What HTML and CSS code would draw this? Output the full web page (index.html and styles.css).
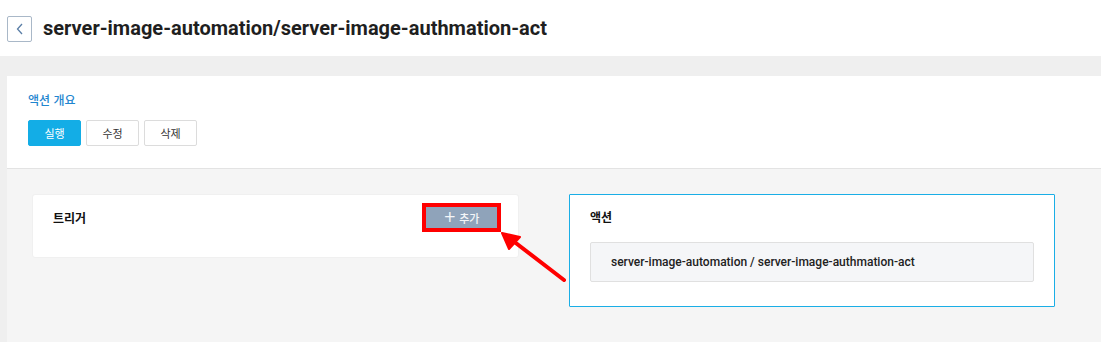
FILE: index.html
```html
<!DOCTYPE html>
<html lang="ko">
<head>
<meta charset="utf-8">
<link rel="stylesheet" href="styles.css">
</head>
<body>
<header class="top">
  <button class="back" aria-label="back">
    <svg width="8" height="12" viewBox="0 0 8 12"><path d="M6 1 L1.5 6 L6 11" fill="none" stroke="#5a7ea6" stroke-width="1.3"/></svg>
  </button>
  <h1 class="title">server-image-automation/server-image-authmation-act</h1>
</header>
<main class="wrap">
  <section class="panel">
    <div class="overview">
      <div class="ov-title">액션 개요</div>
      <div class="btns">
        <button class="btn primary">실행</button>
        <button class="btn">수정</button>
        <button class="btn">삭제</button>
      </div>
    </div>
    <div class="lower">
      <div class="card trigger">
        <div class="card-title">트리거</div>
        <button class="add"><span class="plus">+</span> 추가</button>
      </div>
      <div class="card action">
        <div class="card-title">액션</div>
        <div class="action-box">server-image-automation / server-image-authmation-act</div>
      </div>
    </div>
  </section>
</main>
<svg class="arrow" width="80" height="60" viewBox="0 0 80 60">
  <line x1="64" y1="48" x2="8" y2="5" stroke="#ff0000" stroke-width="4" stroke-linecap="round"/>
  <path d="M2 1 L20 5 L9 17 Z" fill="#ff0000" stroke="#ff0000" stroke-width="2" stroke-linejoin="round"/>
</svg>
</body>
</html>
```
FILE: styles.css
```css
* { box-sizing: border-box; }
html, body { margin: 0; padding: 0; }
body {
  background: #efefef;
  font-family: Roboto, "Noto Sans CJK KR", sans-serif;
  color: #222;
  width: 1101px;
  height: 342px;
  overflow: hidden;
  position: relative;
}
.top {
  height: 56px;
  background: #fff;
  display: flex;
  align-items: center;
  padding-left: 7px;
  gap: 11px;
}
.back {
  width: 25px;
  height: 26px;
  border: 1px solid #a9b8c8;
  border-radius: 2px;
  background: #fff;
  display: flex;
  align-items: center;
  justify-content: center;
  padding: 0;
  margin-top: 2px;
}
.title {
  margin: 0;
  font-size: 20px;
  font-weight: 700;
  color: #1f1f1f;
}
.wrap {
  padding: 20px 0 0 7px;
}
.panel {
  background: #fff;
  height: 266px;
  display: flex;
  flex-direction: column;
}
.overview {
  height: 93px;
  padding: 15px 21px 0;
  border-bottom: 1px solid #e3e3e3;
}
.ov-title {
  font-family: "Noto Sans CJK KR", sans-serif;
  font-size: 12px;
  font-weight: 500;
  color: #1f86cf;
  line-height: 18px;
}
.btns {
  display: flex;
  gap: 5px;
  margin-top: 11px;
}
.btn {
  width: 53px;
  height: 26px;
  border: 1px solid #dcdcdc;
  border-radius: 2px;
  background: #fff;
  font-family: "Noto Sans CJK KR", sans-serif;
  font-size: 11px;
  color: #333;
  padding: 0;
}
.btn.primary {
  background: #13ade6;
  border-color: #13ade6;
  color: #fff;
}
.lower {
  flex: 1;
  background: #f5f5f5;
  display: flex;
  align-items: flex-start;
  gap: 50px;
  padding: 25px 0 0 25px;
}
.card {
  background: #fff;
  border-radius: 3px;
}
.card-title {
  font-family: "Noto Sans CJK KR", sans-serif;
  font-size: 12px;
  font-weight: 700;
  color: #111;
  line-height: 18px;
}
.trigger {
  width: 487px;
  height: 64px;
  border: 1px solid #f0f0f0;
  display: flex;
  justify-content: space-between;
  align-items: flex-start;
  padding: 14px 21px 0 20px;
}
.add {
  margin-top: -2px;
  width: 71px;
  height: 21px;
  background: #8fa3ba;
  border: none;
  outline: 4px solid #ff0000;
  color: #f4f6f8;
  font-family: "Noto Sans CJK KR", sans-serif;
  font-size: 11px;
  font-weight: 500;
  padding: 0;
  display: flex;
  align-items: center;
  justify-content: center;
  gap: 3px;
}
.plus {
  font-family: "DejaVu Sans", sans-serif;
  font-size: 15px;
  font-weight: 400;
  line-height: 1;
  margin-top: -1px;
}
.action {
  width: 486px;
  height: 113px;
  border: 1px solid #1aaee6;
  border-radius: 1px;
  padding: 13px 20px 0 20px;
}
.action-box {
  margin-top: 16px;
  height: 40px;
  background: #f5f6f8;
  border: 1px solid #e0e0e0;
  border-radius: 2px;
  display: flex;
  align-items: center;
  padding-left: 20px;
  font-size: 12px;
  font-weight: 500;
  color: #222;
}
.arrow {
  position: absolute;
  left: 500px;
  top: 232px;
}
```
